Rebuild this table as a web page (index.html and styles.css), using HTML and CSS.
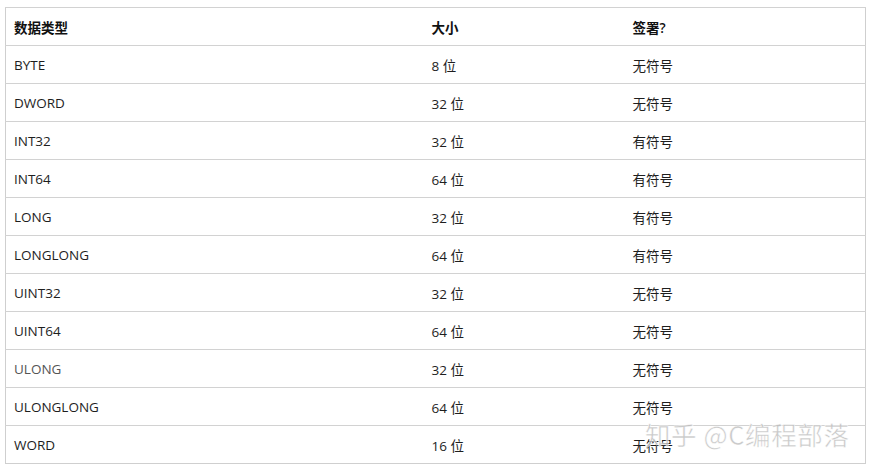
FILE: index.html
```html
<!DOCTYPE html>
<html>
<head>
<meta charset="utf-8">
<link rel="stylesheet" href="styles.css">
</head>
<body>
<div class="wrap">
<table class="dt">
  <colgroup><col class="c1"><col class="c2"><col class="c3"></colgroup>
  <thead>
    <tr><th>数据类型</th><th>大小</th><th>签署?</th></tr>
  </thead>
  <tbody>
    <tr><td>BYTE</td><td>8 位</td><td>无符号</td></tr>
    <tr><td>DWORD</td><td>32 位</td><td>无符号</td></tr>
    <tr><td>INT32</td><td>32 位</td><td>有符号</td></tr>
    <tr><td>INT64</td><td>64 位</td><td>有符号</td></tr>
    <tr><td>LONG</td><td>32 位</td><td>有符号</td></tr>
    <tr><td>LONGLONG</td><td>64 位</td><td>有符号</td></tr>
    <tr><td>UINT32</td><td>32 位</td><td>无符号</td></tr>
    <tr><td>UINT64</td><td>64 位</td><td>无符号</td></tr>
    <tr><td class="light">ULONG</td><td>32 位</td><td>无符号</td></tr>
    <tr><td>ULONGLONG</td><td>64 位</td><td>无符号</td></tr>
    <tr><td>WORD</td><td>16 位</td><td>无符号</td></tr>
  </tbody>
</table>
<div class="wm">知乎 @C编程部落</div>
</div>
</body>
</html>
```
FILE: styles.css
```css
html, body {
  margin: 0;
  padding: 0;
  background: #fff;
}
body {
  font-family: "Open Sans", "Noto Sans CJK SC", sans-serif;
  font-size: 13.5px;
  color: #1e1e1e;
}
.wrap {
  position: relative;
  padding: 7px 0 0 5px;
}
.dt {
  border-collapse: collapse;
  width: 860px;
  table-layout: fixed;
  border: 1px solid #cfcfcf;
}
.c1 { width: 418px; }
.c2 { width: 201px; }
.c3 { width: 241px; }
.dt th, .dt td {
  height: 37px;
  padding: 0 0 0 8px;
  text-align: left;
  vertical-align: middle;
  border-top: 1px solid #d2d2d2;
  white-space: nowrap;
}
.dt th {
  font-weight: 600;
  color: #111;
}
.dt td.light {
  color: #555;
}
.wm {
  position: absolute;
  left: 645px;
  top: 415px;
  font-family: "Noto Sans CJK SC", sans-serif;
  font-size: 25.5px;
  letter-spacing: 0.6px;
  color: rgba(150,150,150,0.5);
  -webkit-text-stroke: 0.6px rgba(255,255,255,0.8);
  text-shadow: 0 0 1px rgba(255,255,255,0.6);
}
```
